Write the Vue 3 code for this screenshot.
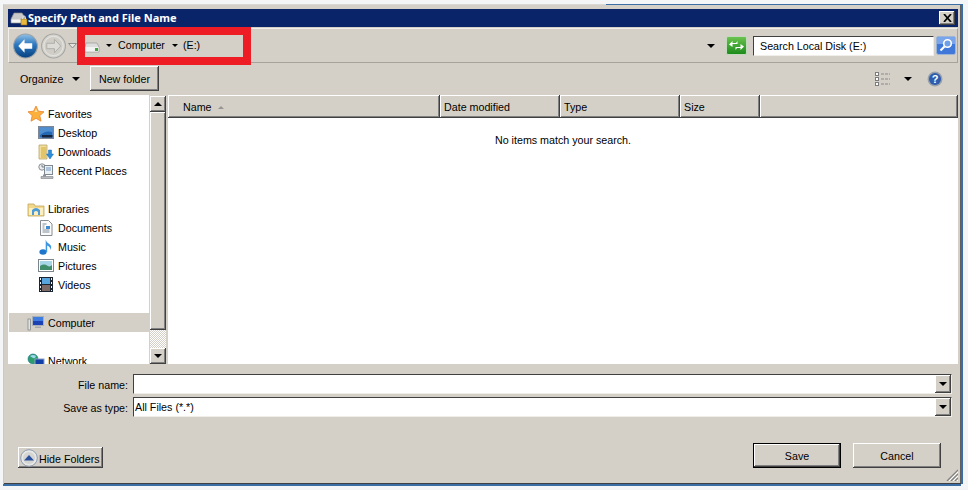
<script setup>
const columns = [
  { name: 'Name', cls: 'col-name', sort: true },
  { name: 'Date modified', cls: 'col-date' },
  { name: 'Type', cls: 'col-type' },
  { name: 'Size', cls: 'col-size' },
  { name: '', cls: 'col-rest' }
]
</script>

<template>
  <div class="page">
    <div class="window">
      <header class="titlebar">
        <svg class="title-icon" width="18" height="16" viewBox="0 0 18 16">
          <path d="M4 3h8l4 6v4H1V9z" fill="#c9c9c9" stroke="#8a8a8a" stroke-width=".7" />
          <path d="M1.5 9.5h14v3h-14z" fill="#f4f4f4" />
          <rect x="11" y="9" width="6" height="6" fill="#e9b93c" stroke="#8b6a12" stroke-width=".6" />
          <path d="M12.5 9V7.5a1.5 1.5 0 0 1 3 0V9" fill="none" stroke="#ddd" stroke-width="1" />
        </svg>
        <span class="title-text">Specify Path and File Name</span>
        <button class="close-btn" aria-label="Close">
          <svg width="9" height="8" viewBox="0 0 9 8"><path d="M1 0l7 8M8 0L1 8" fill="none" stroke="#000" stroke-width="1.700" /></svg>
        </button>
      </header>

      <div class="navbar">
        <div class="nav-round">
          <svg width="25" height="26" viewBox="0 0 26 26">
            <defs>
              <linearGradient id="backFill" x1="0" y1="0" x2="0" y2="1"><stop offset="0" stop-color="#8fc0e6" /><stop offset=".45" stop-color="#2a76bf" /><stop offset="1" stop-color="#06407f" /></linearGradient>
            </defs>
            <circle cx="13" cy="13" r="12.400" fill="url(#backFill)" stroke="#9aa2a8" stroke-width="1.100" />
            <path d="M12 6l-6.500 7 6.500 7v-4.200h8v-5.600h-8z" fill="#fff" />
          </svg>
          <svg width="25" height="26" viewBox="0 0 26 26">
            <circle cx="13" cy="13" r="12.400" fill="#d6d4ce" stroke="#a5a5a2" stroke-width="1.100" />
            <circle cx="13" cy="13" r="10" fill="#cfcdc6" stroke="#e6e5e1" stroke-width="1" />
            <path d="M14 6l6.500 7-6.500 7v-4.200H6v-5.600h8z" fill="#dcdbd6" stroke="#aeaeaa" stroke-width="1" />
          </svg>
          <svg class="nav-drop" width="9" height="6" viewBox="0 0 9 6"><path d="M.5.5h8L4.500 5z" fill="#e6e4de" stroke="#8e8e8a" /></svg>
        </div>

        <div class="address">
          <svg class="drive-icon" width="16" height="11" viewBox="0 0 16 11">
            <path d="M2 1h11l2 4v5H1V5z" fill="#dcdcdc" stroke="#9a9a9a" stroke-width=".7" />
            <rect x="1.500" y="5" width="13" height="4.500" fill="#f2f2f2" />
            <rect x="11" y="6" width="3" height="3" fill="#46a341" />
          </svg>
          <i class="tri small crumb-arrow"></i>
          <span class="crumb">Computer</span>
          <i class="tri small crumb-arrow2"></i>
          <span class="crumb">(E:)</span>
          <i class="tri addr-drop"></i>
          <span class="refresh">
            <svg width="21" height="19" viewBox="0 0 21 19">
              <defs>
                <linearGradient id="greenFill" x1="0" y1="0" x2="0" y2="1"><stop offset="0" stop-color="#6cc44f" /><stop offset="1" stop-color="#1b8a1b" /></linearGradient>
              </defs>
              <rect x=".5" y=".5" width="20" height="18" rx="1.500" fill="url(#greenFill)" stroke="#c2d9bd" />
              <path d="M3 8.500l3.500-3.500v2h3.500l1.500-2v3H6.500v3zM18 10.500l-3.500 3.500v-2H11l-1.500 2v-3h5v-3z" fill="#fff" />
            </svg>
          </span>
        </div>

        <div class="search">
          <span class="search-field">Search Local Disk (E:)</span>
          <span class="search-btn">
            <svg width="20" height="19" viewBox="0 0 20 19">
              <rect x=".5" y=".5" width="19" height="18" rx="2" fill="#3f78d8" stroke="#9cb4d6" />
              <rect x="1" y="1" width="18" height="7" fill="#7aa5ea" />
              <circle cx="11.500" cy="7.500" r="3.800" fill="#6f9fe6" stroke="#fff" stroke-width="1.600" />
              <path d="M8.500 10.500L4.500 14.500" stroke="#fff" stroke-width="2.200" />
            </svg>
          </span>
        </div>
      </div>

      <div class="toolbar">
        <span class="organize"><span class="organize-text">Organize</span><i class="tri organize-arrow"></i></span>
        <button class="btn new-folder">New folder</button>
        <span class="toolbar-fill"></span>
        <svg class="views" width="16" height="14" viewBox="0 0 16 14">
          <g fill="#fff" stroke="#7b7b7b"><rect x=".5" y=".5" width="3" height="3" /><rect x=".5" y="5.500" width="3" height="3" /><rect x=".5" y="10.500" width="3" height="3" /></g>
          <path d="M6 2h9M6 7h9M6 12h9" stroke="#8a8a8a" stroke-dasharray="3 1" />
        </svg>
        <i class="tri views-arrow"></i>
        <svg class="help" width="16" height="16" viewBox="0 0 16 16">
          <circle cx="8" cy="8" r="7.500" fill="#9aa1ab" />
          <circle cx="8" cy="8" r="6" fill="#2f5dad" />
          <text x="8" y="12" text-anchor="middle" class="help-q">?</text>
        </svg>
      </div>

      <main class="content">
        <nav class="tree">
          <div class="tree-list">
            <div class="row group">
              <svg width="18" height="18" viewBox="0 0 18 18"><path d="M9 1l2.400 5.200 5.600.6-4.200 3.800 1.200 5.600L9 13.300l-5 2.900 1.200-5.600L1 6.800l5.600-.6z" fill="#fbb03c" stroke="#e8812a" stroke-width=".8" /><path d="M9 3.500l1.500 3.500H7.500z" fill="#fde3a5" /></svg>
              <span>Favorites</span>
            </div>
            <div class="row child">
              <svg width="16" height="14" viewBox="0 0 16 14"><rect x=".5" y=".5" width="15" height="12" fill="#8fa2c0" stroke="#7d8795" /><rect x="1.500" y="1.500" width="13" height="10" fill="#2368b4" /><path d="M1.500 1.500h13v5q-6-3-13 3z" fill="#4f8fd0" /><rect x="4" y="9" width="10.500" height="2.500" fill="#15253f" /></svg>
              <span>Desktop</span>
            </div>
            <div class="row child">
              <svg width="16" height="16" viewBox="0 0 16 16"><path d="M1 1h8v14H1z" fill="#f1dd9c" stroke="#b9a468" stroke-width=".8" /><path d="M3 3h5v11H3z" fill="#e2c469" /><path d="M10.500 6h3v4h2L12 15 8.500 10h2z" fill="#2f8edb" stroke="#1c6cb0" stroke-width=".5" /></svg>
              <span>Downloads</span>
            </div>
            <div class="row child">
              <svg width="16" height="16" viewBox="0 0 16 16"><circle cx="4" cy="4" r="3.200" fill="#e9edf0" stroke="#8b9096" /><path d="M4 2v2h2" fill="none" stroke="#555" stroke-width=".7" /><rect x="6.500" y="2.500" width="8" height="9" fill="#eaf0f5" stroke="#80888f" /><path d="M8 5h5M8 7h5" stroke="#6f97c4" /><path d="M3 13.500h12v2H3z" fill="#b8bcc0" stroke="#7b7f83" stroke-width=".6" /><path d="M5 11.500h3v2H5z" fill="#8e9296" /></svg>
              <span>Recent Places</span>
            </div>
            <div class="row spacer"></div>
            <div class="row group">
              <svg width="18" height="16" viewBox="0 0 18 16"><path d="M1 3h6l1 2h9v10H1z" fill="#f2d88a" stroke="#c3a45a" stroke-width=".8" /><path d="M2 7h14v7H2z" fill="#fdf0c0" /><path d="M5 14V9q4-4 8 0v5h-2v-3q-2-2-4 0v3z" fill="#4f9bd8" /></svg>
              <span>Libraries</span>
            </div>
            <div class="row child">
              <svg width="14" height="16" viewBox="0 0 14 16"><path d="M1.500.5h8l3.500 3.500v11.500H1.500z" fill="#fbfbfb" stroke="#868c92" /><path d="M3.500 4h4M3.500 6h2M3.500 8h2M3.500 10h7M3.500 12h7" stroke="#7f8d9a" /><rect x="7" y="6" width="4" height="3" fill="#3f8ad0" /></svg>
              <span>Documents</span>
            </div>
            <div class="row child">
              <svg width="14" height="16" viewBox="0 0 14 16"><ellipse cx="4" cy="13" rx="3.600" ry="2.700" fill="#1f77cd" /><path d="M6.700 13V.5q.5 3 3.500 4.500t1.500 6q-.5-3.500-3.500-4.500V13z" fill="#3e95e0" /></svg>
              <span>Music</span>
            </div>
            <div class="row child">
              <svg width="16" height="13" viewBox="0 0 16 13"><rect x=".5" y=".5" width="15" height="12" fill="#fff" stroke="#7d858c" /><rect x="2" y="2" width="12" height="9" fill="#a8d6e6" /><path d="M2 7q4-2.500 7-.500t5-.500v5H2z" fill="#3f8d6b" /></svg>
              <span>Pictures</span>
            </div>
            <div class="row child">
              <svg width="14" height="15" viewBox="0 0 14 15"><rect width="14" height="15" fill="#1a2430" /><rect x="3" y="1" width="8" height="6" fill="#58a5dd" /><rect x="3" y="8" width="8" height="6" fill="#7c6a66" /><path d="M1 1h1v2H1zM1 5h1v2H1zM1 9h1v2H1zM1 13h1v1H1zM12 1h1v2h-1zM12 5h1v2h-1zM12 9h1v2h-1zM12 13h1v1h-1z" fill="#eef2f5" /></svg>
              <span>Videos</span>
            </div>
            <div class="row spacer"></div>
            <div class="row group selected">
              <svg width="18" height="16" viewBox="0 0 18 16"><rect x="1" y="4" width="2.500" height="11" fill="#dfe3e2" stroke="#6b7273" stroke-width=".6" /><rect x="5.500" y="1.500" width="11" height="9" fill="#1a42b4" stroke="#a9b0b8" /><path d="M6 2h10v4H6z" fill="#3e7ce0" /><path d="M8 11.500h6v1.500H8z" fill="#a4a9ae" /></svg>
              <span>Computer</span>
            </div>
            <div class="row spacer"></div>
            <div class="row group">
              <svg width="18" height="16" viewBox="0 0 18 16"><circle cx="6" cy="6" r="5" fill="#2c9e6a" stroke="#1b6f8e" stroke-width=".6" /><path d="M3 3q3-2 6 0-1 3-3 2T3 3z" fill="#9ed7ef" /><rect x="8" y="6" width="9" height="9" fill="#1340a6" stroke="#8aa0c5" /></svg>
              <span>Network</span>
            </div>
          </div>
        </nav>

        <div class="scrollbar">
          <span class="scroll-btn"><i class="tri-up"></i></span>
          <span class="scroll-thumb"></span>
          <span class="scroll-track"></span>
          <span class="scroll-btn"><i class="tri"></i></span>
        </div>

        <section class="list">
          <div class="list-head">
            <div v-for="c in columns" :key="c.cls" class="col" :class="c.cls">
              {{ c.name }}<i v-if="c.sort" class="sort-arrow"></i>
            </div>
          </div>
          <p class="empty">No items match your search.</p>
        </section>
      </main>

      <footer class="footer">
        <div class="fields">
          <label>File name:</label>
          <div class="combo"><span class="combo-text"></span><span class="combo-btn"><i class="tri"></i></span></div>
          <label>Save as type:</label>
          <div class="combo"><span class="combo-text">All Files (*.*)</span><span class="combo-btn"><i class="tri"></i></span></div>
        </div>
        <div class="actions">
          <button class="btn hide-folders">
            <svg width="18" height="18" viewBox="0 0 18 18">
              <circle cx="9" cy="9" r="8.300" fill="#e8e8e6" stroke="#8e9cb0" />
              <circle cx="9" cy="9" r="6" fill="#d4d4d2" />
              <path d="M4 11.500L9 6l5 5.500z" fill="#2a4f9c" />
            </svg>
            <span class="hide-label">Hide Folders</span>
          </button>
          <span class="actions-fill"></span>
          <button class="btn save">Save</button>
          <button class="btn cancel">Cancel</button>
        </div>
        <svg class="grip" width="12" height="12" viewBox="0 0 12 12">
          <path d="M12 1L1 12M12 5L5 12M12 9L9 12" stroke="#808080" stroke-width="1.200" />
          <path d="M12 3L3 12M12 7L7 12M12 11l-1 1" stroke="#fff" stroke-width="1" />
        </svg>
      </footer>
    </div>
    <div class="annotation"></div>
  </div>
</template>

<style>
html, body { margin: 0; background: #f3f5f6; }
</style>

<style scoped>
.page {
  position: relative;
  width: 968px;
  height: 490px;
  padding: 4px 0 0 3px;
  box-sizing: border-box;
  overflow: hidden;
  font: 10.7px/13px "Liberation Sans", Tahoma, sans-serif;
  color: #000;
}
.window {
  position: relative;
  width: 958px;
  height: 480px;
  box-sizing: border-box;
  padding: 4px 3px 3px 4px;
  display: flex;
  flex-direction: column;
  background: #d4d0c8;
  border-top: 1px solid #d8d8d4;
  border-left: 1px solid #c8c8c8;
  box-shadow: inset 0 -1px 0 #404040, inset -1px 0 0 #606060, 2px 0 0 #3a6ea5, 0 2px 0 #3a6ea5;
}
.window::before {
  content: "";
  position: absolute;
  left: 602px;
  right: -2px;
  top: -1px;
  height: 1px;
  background: #3a6ea5;
}
.titlebar {
  height: 18px;
  flex: none;
  display: flex;
  align-items: center;
  background: #0a246a;
  color: #fff;
  padding: 0 3px 0 2px;
}
.title-text { font: 700 11px/13px "Noto Sans", sans-serif; flex: 1; padding-bottom: 1px; }
.close-btn {
  width: 16px;
  height: 14px;
  padding: 0;
  border: 0;
  background: #d4d0c8;
  display: flex;
  align-items: center;
  justify-content: center;
  box-shadow: inset -1px -1px 0 #404040, inset 1px 1px 0 #fff, inset -2px -2px 0 #808080;
}
.navbar {
  height: 35px;
  flex: none;
  display: flex;
  align-items: center;
  margin-top: 1px;
  padding: 0 1px 0 4px;
  box-sizing: border-box;
  border: 1px solid #a6a39c;
  border-top-color: #f1efea;
  border-left-color: #f1efea;
}
.nav-round { display: flex; align-items: center; gap: 3px; width: 64px; flex: none; }
.nav-drop { margin-left: -1px; }
.address {
  flex: 1;
  height: 27px;
  display: flex;
  align-items: center;
  padding-left: 7px;
  box-sizing: border-box;
  margin-right: 6px;
}
.drive-icon { margin-right: 6px; margin-top: 3px; }
.crumb-arrow { margin-right: 6px; }
.crumb-arrow2 { margin: 0 5px 0 7px; }
.addr-drop { margin-left: auto; margin-right: 11px; }
.refresh { display: flex; }
.search { display: flex; gap: 2px; align-items: center; }
.search-field {
  width: 181px;
  height: 20px;
  box-sizing: border-box;
  background: #fff;
  padding-left: 6px;
  line-height: 18px;
  border: 1px solid #404040;
  border-right-color: #f0eee9;
  border-bottom-color: #f0eee9;
}
.search-btn { display: flex; }
.tri {
  display: inline-block;
  width: 0;
  height: 0;
  border-left: 4px solid transparent;
  border-right: 4px solid transparent;
  border-top: 4px solid #000;
}
.tri.small { border-left-width: 3px; border-right-width: 3px; border-top-width: 3px; }
.tri-up {
  display: inline-block;
  width: 0;
  height: 0;
  border-left: 4px solid transparent;
  border-right: 4px solid transparent;
  border-bottom: 4px solid #000;
}
.toolbar {
  height: 32px;
  flex: none;
  display: flex;
  align-items: center;
  padding: 3px 15px 4px 12px;
  box-sizing: border-box;
}
.organize { width: 70px; flex: none; display: flex; align-items: center; }
.organize-text { padding-top: 2px; }
.organize-arrow { margin-left: 9px; }
.toolbar-fill { flex: 1; }
.views { margin-right: 13px; }
.views-arrow { margin-right: 15px; }
.help-q { fill: #fff; font: 700 11px "Liberation Sans", sans-serif; }
.btn {
  padding: 2px 0 0;
  border: 0;
  background: #d4d0c8;
  font: inherit;
  color: #000;
  box-shadow: inset -1px -1px 0 #404040, inset 1px 1px 0 #fff, inset -2px -2px 0 #808080;
}
.new-folder { width: 69px; height: 25px; }
.content { flex: 1; min-height: 0; display: flex; background: #d4d0c8; }
.tree { width: 141px; flex: none; background: #fff; overflow: hidden; }
.tree-list { padding-top: 9px; }
.row { height: 19px; display: flex; align-items: center; }
.row span { padding-top: 2px; }
.row.group { padding-left: 19px; gap: 3px; }
.row.group svg { flex: none; }
.row.child { padding-left: 30px; }
.row.child svg { width: 16px; margin-right: 4px; flex: none; }
.row.selected { background: #d4d0c8; margin-left: 1px; padding-left: 18px; }
.scrollbar {
  width: 16px;
  flex: none;
  margin: 0 2px 0 1px;
  padding-top: 1px;
  box-sizing: border-box;
  display: flex;
  flex-direction: column;
}
.scroll-btn, .scroll-thumb {
  background: #d4d0c8;
  box-shadow: inset -1px -1px 0 #404040, inset 1px 1px 0 #fff, inset -2px -2px 0 #808080;
}
.scroll-btn { height: 16px; display: flex; align-items: center; justify-content: center; flex: none; }
.scroll-thumb { height: 218px; flex: none; }
.scroll-track {
  flex: 1;
  background: repeating-conic-gradient(#d4d0c8 0 25%, #fff 0 50%) 0 0 / 2px 2px;
}
.list { flex: 1; background: #fff; display: flex; flex-direction: column; }
.list-head { height: 23px; display: flex; flex: none; background: #d4d0c8; }
.col {
  box-sizing: border-box;
  padding: 0 0 0 4px;
  line-height: 24px;
  box-shadow: inset -1px -1px 0 #404040, inset 1px 1px 0 #fff, inset -2px -2px 0 #808080;
}
.col-name { width: 272px; padding-left: 15px; }
.col-date { width: 120px; }
.col-type { width: 120px; }
.col-size { width: 80px; }
.col-rest { flex: 1; }
.sort-arrow {
  display: inline-block;
  width: 0;
  height: 0;
  margin: 0 0 2px 6px;
  border-left: 3px solid transparent;
  border-right: 3px solid transparent;
  border-bottom: 3px solid #98958f;
}
.empty { margin: 16px 0 0; text-align: center; line-height: 13px; }
.footer { position: relative; height: 117px; flex: none; display: flex; flex-direction: column; }
.fields {
  display: grid;
  grid-template-columns: 120px 1fr;
  column-gap: 5px;
  row-gap: 3px;
  align-items: center;
  padding: 10px 6px 0 0;
}
.fields label { text-align: right; padding-top: 2px; }
.combo {
  height: 20px;
  display: flex;
  background: #fff;
  box-sizing: border-box;
  border: 1px solid #404040;
  border-right-color: #f0eee9;
  border-bottom-color: #f0eee9;
  padding-left: 1px;
}
.combo-text { flex: 1; line-height: 19px; }
.combo-btn {
  width: 16px;
  flex: none;
  background: #d4d0c8;
  display: flex;
  align-items: center;
  justify-content: center;
  box-shadow: inset -1px -1px 0 #404040, inset 1px 1px 0 #fff, inset -2px -2px 0 #808080;
}
.actions { display: flex; align-items: flex-end; padding: 26px 17px 0 10px; }
.hide-folders {
  width: 85px;
  height: 21px;
  display: flex;
  align-items: center;
  gap: 1px;
  padding: 0 0 0 2px;
  white-space: nowrap;
}
.hide-label { padding-top: 3px; }
.actions-fill { flex: 1; }
.save, .cancel { width: 88px; height: 25px; }
.save { border: 1px solid #000; box-sizing: border-box; margin-right: 12px; }
.grip { position: absolute; right: 0; bottom: 0; }
.annotation {
  position: absolute;
  left: 77px;
  top: 27px;
  width: 174px;
  height: 38px;
  box-sizing: border-box;
  border: 8px solid #ee1c25;
  pointer-events: none;
}
</style>
